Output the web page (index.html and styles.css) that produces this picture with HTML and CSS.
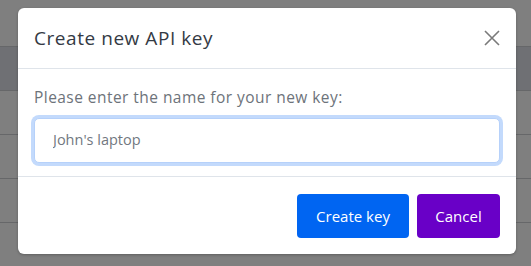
FILE: index.html
```html
<!DOCTYPE html>
<html lang="en">
<head>
    <meta charset="UTF-8">
    <meta name="viewport" content="width=device-width, initial-scale=1.0">
    <title>Create new API key</title>
    <link rel="stylesheet" href="styles.css">
</head>
<body>
    <!-- Table of keys behind the dimmed overlay -->
    <div class="page">
        <div class="row top"></div>
        <div class="row head"></div>
        <div class="row"></div>
        <div class="row"></div>
        <div class="row"></div>
        <div class="row"></div>
    </div>

    <!-- Modal dialog -->
    <div class="modal">
        <div class="modal-header">
            <h2 class="modal-title">Create new API key</h2>
            <button class="close" aria-label="Close">
                <svg width="16" height="16" viewBox="0 0 16 16">
                    <path d="M1 1 L15 15 M15 1 L1 15" stroke="#7a7a7a" stroke-width="1.6" fill="none"/>
                </svg>
            </button>
        </div>
        <div class="modal-body">
            <label class="label" for="key-name">Please enter the name for your new key:</label>
            <input class="input" id="key-name" type="text" placeholder="John's laptop">
        </div>
        <div class="modal-footer">
            <button class="btn btn-primary">Create key</button>
            <button class="btn btn-cancel">Cancel</button>
        </div>
    </div>
</body>
</html>
```

FILE: styles.css
```css
body {
    margin: 0;
    background-color: #7f7f7f;
    font-family: 'Open Sans', sans-serif;
    overflow: hidden;
    height: 266px;
    position: relative;
}
.page {
    display: flex;
    flex-direction: column;
}
.row {
    height: 43px;
    border-bottom: 1px solid #666769;
}
.row.top {
    height: 46px;
}
.row.head {
    background-color: #6f7074;
}
/* Modal */
.modal {
    position: absolute;
    left: 18px;
    top: 8px;
    width: 498px;
    height: 246px;
    background-color: #fff;
    border-radius: 6px;
    box-shadow: 0 1px 3px rgba(0, 0, 0, 0.25);
    display: flex;
    flex-direction: column;
}
.modal-header {
    height: 60px;
    padding: 0 16px;
    display: flex;
    align-items: center;
    justify-content: space-between;
    border-bottom: 1px solid #dfe4ea;
}
.modal-title {
    margin: 0;
    font-size: 19px;
    font-weight: 500;
    letter-spacing: 0.55px;
    color: #343a44;
}
.close {
    border: none;
    background: none;
    padding: 0;
    display: flex;
    cursor: pointer;
}
.modal-body {
    height: 107px;
    padding: 0 16px;
    display: flex;
    flex-direction: column;
    border-bottom: 1px solid #dfe4ea;
}
.label {
    margin-top: 17px;
    font-size: 15.5px;
    letter-spacing: 0.45px;
    color: #6d737a;
}
.input {
    margin-top: 10px;
    height: 45px;
    box-sizing: border-box;
    padding: 0 18px 2px;
    border: 1px solid #b6d1fa;
    border-radius: 5px;
    box-shadow: 0 0 0 3px #c3dafc;
    outline: none;
    font-family: 'Open Sans', sans-serif;
    font-size: 14.5px;
    color: #333;
}
.input::placeholder {
    color: #72787f;
}
.modal-footer {
    flex: 1;
    padding: 0 16px;
    display: flex;
    justify-content: flex-end;
    align-items: center;
    gap: 8px;
}
.btn {
    height: 44px;
    border: none;
    border-radius: 4px;
    color: #fff;
    font-family: 'Open Sans', sans-serif;
    font-size: 15px;
    cursor: pointer;
}
.btn-primary {
    width: 112px;
    background-color: #0065f2;
}
.btn-cancel {
    width: 83px;
    background-color: #6900c7;
}
```
